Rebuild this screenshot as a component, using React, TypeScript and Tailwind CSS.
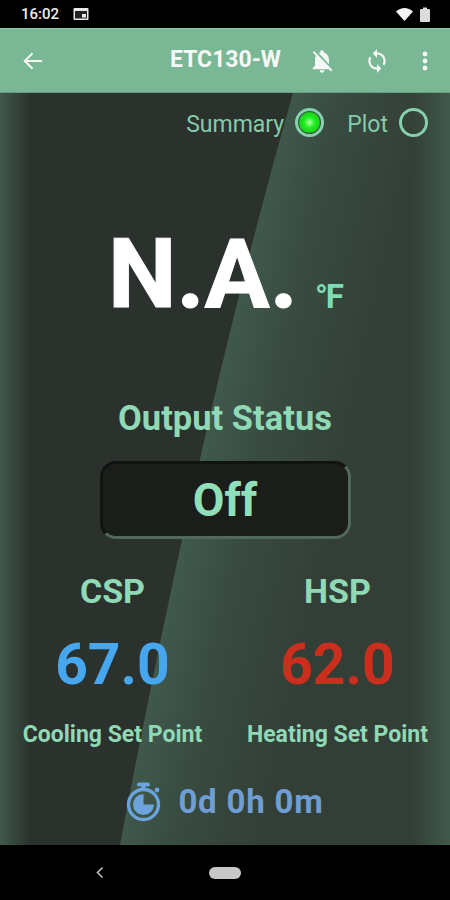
import React from "react";

const Mint = "text-[#8fd9b6]";

function Radio({ on }: { on?: boolean }) {
  return (
    <span className="w-[29px] h-[29px] rounded-full border-[3px] border-[#86d0ae] flex items-center justify-center">
      {on && <span className="w-[21px] h-[21px] rounded-full bg-[radial-gradient(circle,#b4ffb0_0%,#22ee22_35%,#0fb80f_100%)]" />}
    </span>
  );
}

function Background() {
  return (
    <svg className="absolute inset-0 w-full h-full" viewBox="0 0 450 752" preserveAspectRatio="none">
      <defs>
        <linearGradient id="sheen" gradientUnits="userSpaceOnUse" x1="200" y1="376" x2="340" y2="407">
          <stop offset="0" stopColor="#40594c" />
          <stop offset="0.35" stopColor="#394c41" />
          <stop offset="1" stopColor="#333f36" />
        </linearGradient>
        <linearGradient id="edgeL" x1="0" y1="0" x2="1" y2="0">
          <stop offset="0" stopColor="#40594c" />
          <stop offset="1" stopColor="#40594c" stopOpacity="0" />
        </linearGradient>
        <linearGradient id="edgeR" x1="1" y1="0" x2="0" y2="0">
          <stop offset="0" stopColor="#40594b" />
          <stop offset="1" stopColor="#40594b" stopOpacity="0" />
        </linearGradient>
      </defs>
      <rect width="450" height="752" fill="#2b322d" />
      <path d="M293 0 C222 250 168 500 120 752 L450 752 L450 0 Z" fill="url(#sheen)" />
      <rect width="30" height="752" fill="url(#edgeL)" />
      <rect x="412" width="38" height="752" fill="url(#edgeR)" />
    </svg>
  );
}

function Reading({ label, value, color, sub }: { label: string; value: string; color: string; sub: string }) {
  return (
    <div className="flex flex-col items-center w-[225px]">
      <div className={`text-[34px] leading-[36px] font-bold ${Mint}`}>{label}</div>
      <div className={`mt-[23px] text-[57px] leading-[66px] font-bold ${color}`}>{value}</div>
      <div className={`mt-[24px] text-[23px] leading-[26px] font-bold ${Mint}`}>{sub}</div>
    </div>
  );
}

export default function App() {
  return (
    <div className="w-[450px] h-[900px] flex flex-col bg-black font-['Roboto',sans-serif] overflow-hidden">
      {/* status bar */}
      <div className="h-[28px] bg-black flex items-center pl-[21px] pr-[20px] text-[#ececec]">
        <span className="text-[15px] font-medium">16:02</span>
        <svg className="ml-[14px]" width="16" height="14" viewBox="0 0 16 14">
          <rect x="0.5" y="1" width="15" height="12" rx="1" fill="#e8e8e8" />
          <rect x="2" y="4" width="12" height="7.5" fill="#222" />
          <rect x="9" y="7" width="4" height="3.5" fill="#e8e8e8" />
        </svg>
        <svg className="ml-auto" width="17" height="13" viewBox="0 0 17 13">
          <path d="M0 3.6 C5 -1.2 12 -1.2 17 3.6 L8.5 13 Z" fill="#f2f2f2" />
        </svg>
        <svg className="ml-[7px]" width="10" height="15" viewBox="0 0 10 15">
          <path d="M3 0.5 H7 V2 H9 A1 1 0 0 1 10 3 V14 A1 1 0 0 1 9 15 H1 A1 1 0 0 1 0 14 V3 A1 1 0 0 1 1 2 H3 Z" fill="#dcdcdc" />
        </svg>
      </div>

      {/* app bar */}
      <div className="h-[65px] bg-[#7ab795] border-b border-[#6c9d83] border-t border-t-[#8cc4a5] flex items-center text-white">
        <svg className="ml-[22px]" width="22" height="22" viewBox="0 0 24 24" fill="none" stroke="#f4f8f5" strokeWidth="2.2">
          <path d="M22 12 H3 M11.5 3.5 L3 12 L11.5 20.5" />
        </svg>
        <span className="ml-[126px] w-[111px] text-[23px] font-bold whitespace-nowrap text-[#f6f9f7]">ETC130-W</span>
        <svg className="ml-[27px]" width="28" height="28" viewBox="0 0 24 24" fill="#f4f8f5">
          <path d="M20 18.69L7.84 6.14 5.27 3.49 4 4.76l2.8 2.8v.01c-.52.99-.8 2.16-.8 3.42v5l-2 2v1h13.73l2 2L21 19.72l-1-1.03zM12 22c1.11 0 2-.89 2-2h-4c0 1.11.89 2 2 2zm6-7.32V11c0-3.08-1.64-5.64-4.5-6.32V4c0-.83-.67-1.5-1.5-1.5s-1.5.67-1.5 1.5v.68c-.15.03-.29.08-.42.12-.1.03-.2.07-.3.11h-.01c-.2.08-.4.17-.59.27-.01 0-.01 0-.02.01L18 14.68z" />
        </svg>
        <svg className="ml-[28px]" width="26" height="26" viewBox="0 0 24 24" fill="#f4f8f5">
          <path d="M12 4V1L8 5l4 4V6c3.31 0 6 2.69 6 6 0 1.01-.25 1.97-.7 2.8l1.46 1.46C19.54 15.03 20 13.57 20 12c0-4.42-3.58-8-8-8zm0 14c-3.31 0-6-2.69-6-6 0-1.01.25-1.97.7-2.8L5.24 7.74C4.46 8.97 4 10.43 4 12c0 4.42 3.58 8 8 8v3l4-4-4-4v3z" />
        </svg>
        <svg className="ml-[31px]" width="8" height="20" viewBox="0 0 8 20" fill="#f4f8f5">
          <circle cx="4" cy="3" r="2.4" />
          <circle cx="4" cy="10" r="2.4" />
          <circle cx="4" cy="17" r="2.4" />
        </svg>
      </div>

      {/* main */}
      <div className="relative h-[752px]">
        <Background />
        <div className="relative flex flex-col items-center h-full">
          <div className="self-end mr-[22px] mt-[14px] flex items-center h-[30px]">
            <span className="mt-[6px] text-[23px] text-[#85cba9]">Summary</span>
            <span className="ml-[11px]"><Radio on /></span>
            <span className="mt-[6px] ml-[23px] text-[23px] text-[#85cba9]">Plot</span>
            <span className="ml-[11px]"><Radio /></span>
          </div>

          <div className="mt-[82px] h-[110px] flex items-end w-full pl-[108px]">
            <span className="font-bold text-[97px] leading-[110px] text-white [-webkit-text-stroke:1px_white]">N.A.</span>
            <span className="ml-[17px] mb-[14px] font-bold text-[33px] leading-[36px] text-[#7fdcb4] tracking-[-2px]">°F</span>
          </div>

          <div className={`mt-[69px] text-[34.5px] leading-[40px] font-bold ${Mint}`}>Output Status</div>

          <div className="mt-[23px] w-[251px] h-[78px] rounded-[16px] bg-[#1b1d1a] border-t-[3px] border-l-[3px] border-t-[#111311] border-l-[#111311] border-b-[3px] border-r-[3px] border-b-[#51695b] border-r-[#51695b] flex items-center justify-center">
            <span className="text-[46px] font-bold text-[#90dfbb] leading-none -mt-[1px]">Off</span>
          </div>

          <div className="mt-[34px] flex w-[450px]">
            <Reading label="CSP" value="67.0" color="text-[#46a6ee]" sub="Cooling Set Point" />
            <Reading label="HSP" value="62.0" color="text-[#cc2e1e]" sub="Heating Set Point" />
          </div>

          <div className="mt-[34px] flex items-center">
            <svg width="36" height="40" viewBox="0 0 36 40" fill="none">
              <rect x="11" y="0.5" width="13" height="4" rx="2" fill="#6ba3dc" />
              <rect x="15.5" y="3" width="4" height="4" fill="#6ba3dc" />
              <circle cx="31" cy="8" r="2.4" fill="#6ba3dc" />
              <circle cx="17.5" cy="22.5" r="15" stroke="#6ba3dc" strokeWidth="3.4" />
              <path d="M17.5 12 A10.5 10.5 0 1 0 28 22.5 H17.5 Z" fill="#6ba3dc" />
            </svg>
            <span className="ml-[16px] text-[33px] leading-[40px] font-bold tracking-[0.8px] text-[#6f9ed4]">0d 0h 0m</span>
          </div>
        </div>
      </div>

      {/* nav */}
      <div className="flex-1 bg-black relative flex items-center justify-center">
        <div className="w-[32px] h-[12px] rounded-full bg-[#c8c8c8]" />
        <svg className="absolute left-[95px] top-[21px]" width="10" height="13" viewBox="0 0 10 13" fill="none" stroke="#bdbdbd" strokeWidth="1.6">
          <path d="M7.5 1.5 L2.5 6.5 L7.5 11.5" />
        </svg>
      </div>
    </div>
  );
}
